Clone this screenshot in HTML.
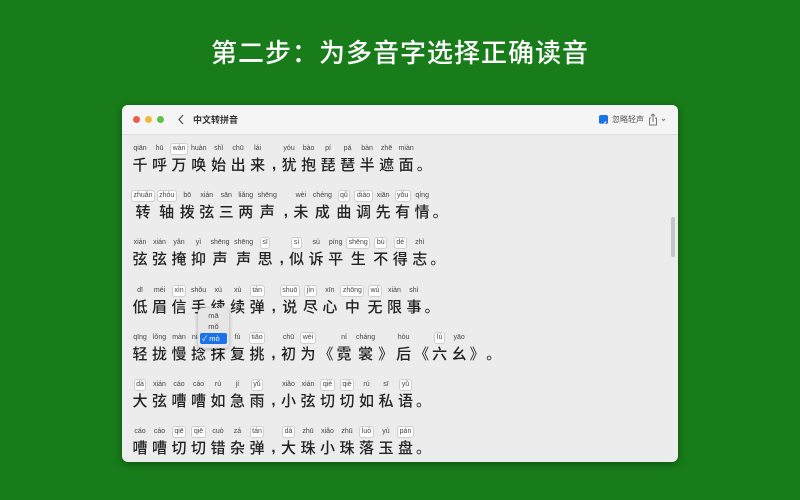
<!DOCTYPE html>
<html><head><meta charset="utf-8"><style>
*{margin:0;padding:0;box-sizing:border-box}
body{width:800px;height:500px;background:#177c19;font-family:"Liberation Sans","Noto Sans CJK SC",sans-serif;position:relative;overflow:hidden}
.title{position:absolute;top:33px;left:0;width:800px;text-align:center;color:#fff;font-size:26px;font-weight:500;letter-spacing:1px}
.win{position:absolute;left:122px;top:105px;width:556px;height:357px;background:#ececec;border-radius:6px;overflow:hidden;box-shadow:0 2px 8px rgba(0,0,0,.35)}
.bar{height:30px;background:#f5f5f5;border-bottom:1px solid #dcdcdc;position:relative}
.dot{position:absolute;top:11px;width:7px;height:7px;border-radius:50%}
.bt{position:absolute;left:71px;top:8px;font-size:9px;font-weight:bold;color:#333}
.line{position:absolute;left:9px;display:flex;align-items:flex-end}
.c{display:flex;flex-direction:column;align-items:center;min-width:18px;margin-right:1.5px}
.p{font-size:7px;color:#444;height:12px;line-height:12px;padding:0 1.5px;white-space:nowrap}
.p.b{background:#fff;border:1px solid #cfcfcf;border-radius:3px;line-height:10px}
.h{font-size:15px;color:#222;line-height:20px;font-family:"Noto Sans CJK SC",sans-serif;font-weight:500}
.pu{font-size:15px;color:#222;line-height:20px;margin-right:1.5px;font-family:"Noto Sans CJK SC",sans-serif}
.cm{font-size:15px;color:#222;line-height:20px;width:12px;text-align:center;font-weight:bold}
</style></head><body>
<div class="title">第二步：为多音字选择正确读音</div>
<div class="win">
<div class="bar">
<div class="dot" style="left:11px;background:#ee5a52"></div>
<div class="dot" style="left:23px;background:#f5b935"></div>
<div class="dot" style="left:35px;background:#5cc145"></div>
<svg style="position:absolute;left:55px;top:9px" width="8" height="11"><path d="M6 1 L2 5.5 L6 10" stroke="#555" stroke-width="1.3" fill="none"/></svg>
<div class="bt">中文转拼音</div>
<div style="position:absolute;left:477px;top:10px;width:9px;height:9px;background:#1a73e8;border-radius:2px"><svg width="9" height="9"><path d="M2 4.6 L3.8 6.5 L7 2.5" stroke="#fff" stroke-width="1.3" fill="none"/></svg></div>
<div style="position:absolute;left:490px;top:9px;font-size:8px;color:#555">忽略轻声</div>
<svg style="position:absolute;left:526px;top:8px" width="18" height="13"><path d="M3 5 H1.5 V12 H8.5 V5 H7 M5 9 V1 M3 3 L5 1 L7 3" stroke="#777" stroke-width="1" fill="none"/><path d="M14 6 L15.5 7.5 L17 6" stroke="#777" stroke-width="1" fill="none"/></svg>
</div>
<div style="position:absolute;right:3px;top:112px;width:4px;height:40px;background:#c4c4c4;border-radius:2px"></div>
<div id="lines"></div>
<div style="position:absolute;left:76px;top:203px;width:31px;height:40px;background:#e6e6e6;border-radius:4px;box-shadow:0 1px 4px rgba(0,0,0,.3)">
<div style="font-size:7.5px;color:#444;text-align:center;margin-top:3px">mā</div>
<div style="font-size:7.5px;color:#444;text-align:center;margin-top:2px">mǒ</div>
<div style="margin:2px 2px 0;background:#1a73e8;color:#fff;font-size:7.5px;border-radius:2px;padding:0 2px">✓ mò</div>
</div>
</div>
<script>
var L=[
"qiān 千|hū 呼|*wàn 万|huàn 唤|shǐ 始|chū 出|lái 来|，|yóu 犹|bào 抱|pí 琵|pá 琶|bàn 半|zhē 遮|miàn 面|。",
"*zhuǎn 转|*zhóu 轴|bō 拨|xián 弦|sān 三|liǎng 两|shēng 声|，|wèi 未|chéng 成|*qǔ 曲|*diào 调|xiān 先|*yǒu 有|qíng 情|。",
"xián 弦|xián 弦|yǎn 掩|yì 抑|shēng 声|shēng 声|*sī 思|，|*sì 似|sù 诉|píng 平|*shēng 生|*bù 不|*dé 得|zhì 志|。",
"dī 低|méi 眉|*xìn 信|shǒu 手|xù 续|xù 续|*tán 弹|，|*shuō 说|*jìn 尽|xīn 心|*zhōng 中|*wú 无|xiàn 限|shì 事|。",
"qīng 轻|lǒng 拢|màn 慢|niǎn 捻|mò 抹|fù 复|*tiāo 挑|，|chū 初|*wéi 为|《|ní 霓|cháng 裳|》|hòu 后|《|*lù 六|yāo 幺|》|。",
"*dà 大|xián 弦|cáo 嘈|cáo 嘈|rú 如|jí 急|*yǔ 雨|，|xiǎo 小|xián 弦|*qiè 切|*qiè 切|rú 如|sī 私|*yǔ 语|。",
"cáo 嘈|cáo 嘈|*qiē 切|*qiē 切|cuò 错|zá 杂|*tán 弹|，|*dà 大|zhū 珠|xiǎo 小|zhū 珠|*luò 落|yù 玉|*pán 盘|。"];
var h="";
L.forEach(function(s,i){
h+='<div class="line" style="top:'+(38+i*47.2)+'px">';
s.split("|").forEach(function(t){
var a=t.split(" ");
if(t=="，"){h+='<div class="cm">,</div>';return;}
if(a.length<2){h+='<div class="pu">'+t+'</div>';return;}
var b=a[0][0]=="*";var p=b?a[0].slice(1):a[0];
if(i==4&&a[1]=="抹"){h+='<div class="c"><div class="p" style="visibility:hidden">x</div><div class="h">'+a[1]+'</div></div>';return;}
h+='<div class="c"><div class="p'+(b?' b':'')+'">'+p+'</div><div class="h">'+a[1]+'</div></div>';
});
h+='</div>';});
document.getElementById("lines").innerHTML=h;
</script>
</body></html>
